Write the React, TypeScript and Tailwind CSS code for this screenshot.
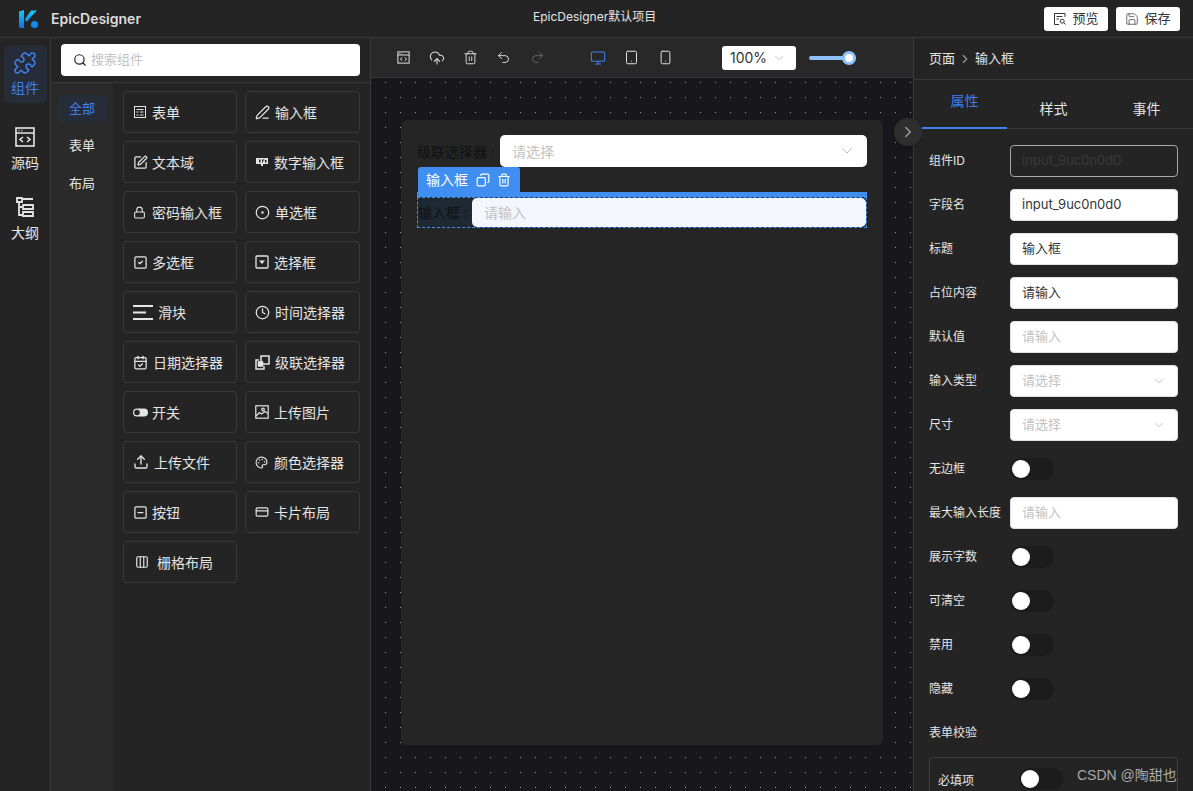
import {
  Search, Puzzle, PenLine, SquarePen, Lock, CircleDot, SquareCheck, Clock, CalendarCheck,
  Upload, SquareMinus, CreditCard, Columns3, CloudUpload, Trash2, Undo2, Redo2, Monitor,
  Tablet, Smartphone, ChevronDown, ChevronRight, Copy, Save, Palette,
} from "lucide-react"
import type { ReactNode } from "react"

const SourceIcon = ({ size = 24 }: { size?: number }) => (
  <svg width={size} height={size} viewBox="0 0 24 24" fill="none" stroke="currentColor" strokeWidth="1.6">
    <rect x="3" y="3" width="18" height="18" />
    <path d="M3 8h18M5.5 5.5h1M8.5 5.5h1" />
    <path d="M10 12l-3 2.5 3 2.5M14 12l3 2.5-3 2.5" />
  </svg>
)

const OutlineIcon = () => (
  <svg width="24" height="24" viewBox="0 0 24 24" fill="none" stroke="currentColor" strokeWidth="1.8">
    <path d="M4 3h5v4H4zM6 7v13h3M6 12h3" />
    <path d="M10 4h10M10 10h10v4H10zM10 17h10v4H10z" />
  </svg>
)

const LogoIcon = () => (
  <svg width="20" height="18" viewBox="0 0 20 18">
    <defs>
      <linearGradient id="logo" x1="0" y1="0" x2="0" y2="1">
        <stop offset="0" stopColor="#18c8f0" />
        <stop offset="1" stopColor="#1470f0" />
      </linearGradient>
    </defs>
    <path d="M0 1.5 5 0v18H2a2 2 0 0 1-2-2zM6 9l6-8.500h6L11 8l-3.500 4z" fill="url(#logo)" />
    <circle cx="15.500" cy="14.500" r="3.500" fill="#0f8cf0" />
  </svg>
)

const FormIcon = () => (
  <svg width="14" height="14" viewBox="0 0 14 14" fill="none" stroke="currentColor">
    <rect x="1.500" y="1.500" width="11" height="11" />
    <path d="M3.500 4.500h7M3.500 7h2M7 7h3.500M3.500 10h2M7 10h3.500" />
  </svg>
)

const NumberIcon = () => (
  <svg width="14" height="14" viewBox="0 0 14 14" fill="currentColor">
    <path d="M1 3h12v6H8v2H6V9H1z" />
    <path d="M4 4.500h1.500v3H4zM7 4.500h2.500v1H8v2H7zM10 5h1.500v2.500H10z" fill="#252525" />
  </svg>
)

const SelectIcon = () => (
  <svg width="14" height="14" viewBox="0 0 14 14" fill="none" stroke="currentColor" strokeWidth="1.300">
    <rect x="1" y="1" width="12" height="12" rx="1" />
    <path d="M4 5.500h6L7 9z" fill="currentColor" stroke="none" />
  </svg>
)

const SliderIcon = () => (
  <svg width="20" height="15" viewBox="0 0 20 15" fill="currentColor">
    <path d="M0 0h20v2H0zM0 6.500h13v2H0zM0 13h20v2H0z" />
  </svg>
)

const CascadeIcon = () => (
  <svg width="15" height="15" viewBox="0 0 15 15" fill="none" stroke="currentColor" strokeWidth="1.500">
    <rect x="6" y="1" width="8" height="8" />
    <path d="M4 5H1v9h8v-3" />
    <rect x="3.500" y="7" width="4" height="4" fill="currentColor" />
  </svg>
)

const SwitchIcon = () => (
  <svg width="15" height="9" viewBox="0 0 15 9">
    <rect width="15" height="8" y="0.500" rx="4" fill="#e5e5e5" />
    <circle cx="4" cy="4.500" r="2.800" fill="#252525" />
  </svg>
)

const ImageIcon = () => (
  <svg width="14" height="14" viewBox="0 0 14 14" fill="none" stroke="currentColor" strokeWidth="1.200">
    <rect x="0.800" y="0.800" width="12.400" height="12.400" />
    <circle cx="8" cy="4.500" r="1.300" />
    <path d="M1 11l3.500-3.500 2 1.500L10 6.500l3 2" />
  </svg>
)

const PreviewIcon = () => (
  <svg width="14" height="14" viewBox="0 0 14 14" fill="none" stroke="#333" strokeWidth="1">
    <path d="M12 5V1.500H1.500v11H6M3.500 4.500h6M3.500 7H6" />
    <circle cx="9.200" cy="9.200" r="2" />
    <path d="M10.700 10.700 12.500 12.500" />
  </svg>
)

interface WidgetItem {
  name: string
  icon: ReactNode
  slot: string
}

const items: WidgetItem[] = [
  { name: "表单", icon: <FormIcon />, slot: "w-[19px]" },
  { name: "输入框", icon: <PenLine size={15} />, slot: "w-[20px]" },
  { name: "文本域", icon: <SquarePen size={15} />, slot: "w-[19px]" },
  { name: "数字输入框", icon: <NumberIcon />, slot: "w-[19px]" },
  { name: "密码输入框", icon: <Lock size={13} />, slot: "w-[19px]" },
  { name: "单选框", icon: <CircleDot size={15} />, slot: "w-[20px]" },
  { name: "多选框", icon: <SquareCheck size={15} />, slot: "w-[19px]" },
  { name: "选择框", icon: <SelectIcon />, slot: "w-[19px]" },
  { name: "滑块", icon: <SliderIcon />, slot: "w-[25px]" },
  { name: "时间选择器", icon: <Clock size={15} />, slot: "w-[20px]" },
  { name: "日期选择器", icon: <CalendarCheck size={15} />, slot: "w-[20px]" },
  { name: "级联选择器", icon: <CascadeIcon />, slot: "w-[20px]" },
  { name: "开关", icon: <SwitchIcon />, slot: "w-[19px]" },
  { name: "上传图片", icon: <ImageIcon />, slot: "w-[19px]" },
  { name: "上传文件", icon: <Upload size={16} />, slot: "w-[21px]" },
  { name: "颜色选择器", icon: <Palette size={13} />, slot: "w-[19px]" },
  { name: "按钮", icon: <SquareMinus size={15} />, slot: "w-[19px]" },
  { name: "卡片布局", icon: <CreditCard size={14} />, slot: "w-[19px]" },
  { name: "栅格布局", icon: <Columns3 size={14} />, slot: "w-[24px] pl-[2px]" },
]

const TextField = ({ value, placeholder }: { value?: string; placeholder?: string }) => (
  <div className="w-[168px] h-[32px] bg-white rounded-[4px] border border-[#e0e0e6] px-[11px] flex items-center text-[13px] text-[#333639]">
    {value ?? <span className="text-[#c2c2c2]">{placeholder}</span>}
  </div>
)

const SelectField = () => (
  <div className="w-[168px] h-[32px] bg-white rounded-[4px] border border-[#e0e0e6] px-[11px] flex items-center justify-between text-[13px] text-[#c2c2c2]">
    请选择
    <ChevronDown size={14} strokeWidth={1} className="text-[#999]" />
  </div>
)

const Toggle = () => (
  <div className="w-[44px] h-[22px] rounded-full bg-[#1c1c1c] flex items-center pl-[2px]">
    <div className="w-[18px] h-[18px] rounded-full bg-white" />
  </div>
)

const PropRow = ({ label, children }: { label: string; children: ReactNode }) => (
  <div className="h-[32px] flex items-center mb-[12px]">
    <div className="w-[81px] shrink-0 text-[12px] text-[#e5e5e5] whitespace-nowrap">{label}</div>
    {children}
  </div>
)

export default function App() {
  return (
    <div
      className="w-[1193px] h-[791px] overflow-hidden relative flex flex-col bg-[#242424] text-[#e5e5e5]"
      style={{ fontFamily: 'Inter, "Noto Sans CJK SC", sans-serif' }}
    >
      {/* Header */}
      <header className="h-[38px] shrink-0 flex items-center justify-between pl-[19px] pr-[13px] border-b border-[#3a3a3a] bg-[#242424] relative">
        <div className="flex items-center gap-[12px]">
          <LogoIcon />
          <span className="text-[14px] font-semibold text-[#dcdcdc]">EpicDesigner</span>
        </div>
        <div className="absolute left-[533px] top-[8px] text-[12px] text-[#e5e5e5]">EpicDesigner默认项目</div>
        <div className="flex items-center gap-[8px]">
          <button className="w-[64px] h-[24px] bg-white rounded-[3px] flex items-center justify-center gap-[5px] text-[13px] text-[#333]">
            <PreviewIcon />
            预览
          </button>
          <button className="w-[64px] h-[24px] bg-white rounded-[3px] flex items-center justify-center gap-[5px] text-[13px] text-[#333]">
            <Save size={14} strokeWidth={1.2} />
            保存
          </button>
        </div>
      </header>

      <div className="flex-1 flex min-h-0">
        {/* Icon rail */}
        <nav className="w-[51px] shrink-0 border-r border-[#3a3a3a] pt-[7px] flex flex-col items-center">
          <div className="w-[43px] h-[58px] rounded-[6px] bg-[#262d38] flex flex-col items-center justify-center text-[#3f7fee] text-[14px] gap-[2px]">
            <Puzzle size={24} strokeWidth={1.5} />
            组件
          </div>
          <div className="mt-[22px] flex flex-col items-center gap-[3px] text-[14px]">
            <SourceIcon />
            源码
          </div>
          <div className="mt-[22px] flex flex-col items-center gap-[3px] text-[14px]">
            <OutlineIcon />
            大纲
          </div>
        </nav>

        {/* Widget panel */}
        <aside className="w-[320px] shrink-0 border-r border-[#3a3a3a] flex flex-col">
          <div className="h-[45px] shrink-0 border-b border-[#3a3a3a] px-[10px] pt-[6px]">
            <div className="h-[32px] bg-white rounded-[4px] flex items-center pl-[12px] gap-[4px] text-[13px] text-[#c2c2c2]">
              <Search size={14} className="text-[#222]" />
              搜索组件
            </div>
          </div>
          <div className="flex-1 flex min-h-0">
            <div className="w-[62px] shrink-0 bg-[#2a2a2a] pt-[12px] flex flex-col items-center text-[13px]">
              <div className="w-[50px] h-[28px] rounded-[5px] bg-[#262d38] text-[#3f7fee] flex items-center justify-center">全部</div>
              <div className="h-[28px] mt-[9px] flex items-center">表单</div>
              <div className="h-[28px] mt-[10px] flex items-center">布局</div>
            </div>
            <div className="flex-1 pl-[10px] pr-[10px] pt-[8px]">
              <div className="grid grid-cols-[114px_115px] gap-x-[8px] gap-y-[8px]">
                {items.map((item) => (
                  <div
                    key={item.name}
                    className="h-[42px] rounded-[4px] border border-[#3a3a3a] pl-[9px] flex items-center text-[14px] text-[#e5e5e5] whitespace-nowrap"
                  >
                    <span className={`${item.slot} shrink-0 flex items-center`}>{item.icon}</span>
                    {item.name}
                  </div>
                ))}
              </div>
            </div>
          </div>
        </aside>

        {/* Canvas column */}
        <main className="w-[543px] shrink-0 flex flex-col border-r border-[#3a3a3a]">
          <div className="h-[40px] shrink-0 border-b border-[#3a3a3a] bg-[#282828] flex items-center pl-[25px] text-[#e0e0e0]">
            <SourceIcon size={15} />
            <CloudUpload size={16} strokeWidth={1.6} className="ml-[18px]" />
            <Trash2 size={15} strokeWidth={1.5} className="ml-[18px]" />
            <Undo2 size={15} strokeWidth={1.5} className="ml-[18px]" />
            <Redo2 size={15} strokeWidth={1.5} className="ml-[19px] text-[#666]" />
            <Monitor size={16} strokeWidth={1.6} className="ml-[45px] text-[#3f7fee]" />
            <Tablet size={15} strokeWidth={1.6} className="ml-[18px]" />
            <Smartphone size={15} strokeWidth={1.6} className="ml-[19px]" />
            <div className="ml-[49px] w-[74px] h-[24px] bg-white rounded-[3px] flex items-center justify-between pl-[8px] pr-[10px] text-[14px] text-[#333]">
              100%
              <ChevronDown size={14} strokeWidth={1} className="text-[#999]" />
            </div>
            <div className="ml-[13px] w-[47px] h-[4px] rounded-full bg-[#8cc0f8] relative">
              <div className="absolute right-0 top-[-5px] w-[14px] h-[14px] rounded-full bg-white border-[3px] border-[#8cc0f8]" />
            </div>
          </div>

          <div className="flex-1 relative bg-[#18181c] bg-[radial-gradient(#9a9a9a_0.6px,transparent_0.9px)] bg-[size:15px_15px] bg-[position:7px_-3px] pt-[42px] px-[30px]">
            <div className="w-[482px] h-[625px] bg-[#252525] rounded-[6px] pt-[15px] pl-[16px] pr-[16px] relative">
              <div className="flex items-center h-[32px] text-[14px] text-[#111]">
                <span className="w-[83px] whitespace-nowrap">级联选择器 :</span>
                <div className="flex-1 h-[32px] bg-white rounded-[5px] flex items-center justify-between px-[12px] text-[#c2c2c2]">
                  请选择
                  <ChevronDown size={16} strokeWidth={1} className="text-[#999]" />
                </div>
              </div>

              {/* Selected field */}
              <div className="mt-[25px] border-t-[5px] border-t-[#408ff0] relative">
                <div className="h-[31px] flex items-stretch border border-dashed border-[#408ff0] bg-[#1f2933] text-[14px] text-[#111]">
                  <span className="w-[54px] flex items-center whitespace-nowrap">输入框 :</span>
                  <div className="flex-1 bg-[#f3f6fd] rounded-[5px] flex items-center px-[12px] text-[#c2c2c2]">请输入</div>
                </div>
                <div className="absolute left-[1px] top-[-30px] w-[102px] h-[25px] bg-[#408ff0] rounded-t-[3px] flex items-center pl-[8px] text-[14px] text-white">
                  输入框
                  <Copy size={14} className="ml-[8px] -scale-x-100" />
                  <Trash2 size={14} className="ml-[7px]" />
                </div>
              </div>
            </div>
          </div>
        </main>

        {/* Properties panel */}
        <aside className="flex-1 min-w-0 flex flex-col">
          <div className="h-[42px] shrink-0 border-b border-[#3a3a3a] pl-[15px] flex items-center text-[13px] text-[#e5e5e5]">
            页面
            <ChevronRight size={14} className="mx-[3px] text-[#999]" />
            输入框
          </div>
          <div className="h-[49px] shrink-0 border-b border-[#3a3a3a] pl-[8px] flex text-[14px]">
            <div className="w-[85px] -mb-px h-[49px] border-b-2 border-[#3f7fee] text-[#3f7fee] flex justify-center pt-[10px]">属性</div>
            <div className="w-[93px] flex justify-center pt-[18px]">样式</div>
            <div className="w-[93px] flex justify-center pt-[18px]">事件</div>
          </div>
          <div className="pl-[15px] pt-[16px]">
            <PropRow label="组件ID">
              <div className="w-[168px] h-[32px] rounded-[4px] border border-[#a8a8a8] px-[11px] flex items-center text-[13px] text-[#3a3a3a]">input_9uc0n0d0</div>
            </PropRow>
            <PropRow label="字段名"><TextField value="input_9uc0n0d0" /></PropRow>
            <PropRow label="标题"><TextField value="输入框" /></PropRow>
            <PropRow label="占位内容"><TextField value="请输入" /></PropRow>
            <PropRow label="默认值"><TextField placeholder="请输入" /></PropRow>
            <PropRow label="输入类型"><SelectField /></PropRow>
            <PropRow label="尺寸"><SelectField /></PropRow>
            <PropRow label="无边框"><Toggle /></PropRow>
            <PropRow label="最大输入长度"><TextField placeholder="请输入" /></PropRow>
            <PropRow label="展示字数"><Toggle /></PropRow>
            <PropRow label="可清空"><Toggle /></PropRow>
            <PropRow label="禁用"><Toggle /></PropRow>
            <PropRow label="隐藏"><Toggle /></PropRow>
            <div className="h-[32px] flex items-center text-[12px] text-[#e5e5e5]">表单校验</div>
            <div className="mt-[8px] w-[249px] h-[60px] rounded-[4px] border border-[#3f3f3f] pl-[8px] pt-[10px] flex items-start">
              <span className="w-[81px] text-[12px] pt-[4px]">必填项</span>
              <Toggle />
            </div>
          </div>
        </aside>
      </div>

      <div className="absolute left-[894px] top-[118px] w-[28px] h-[28px] rounded-full bg-[#2e2e2e] shadow-md flex items-center justify-center text-[#9a9a9a]">
        <ChevronRight size={18} strokeWidth={2} />
      </div>
      <div className="absolute left-[1077px] top-[765px] text-[14px] text-[#a8a8a8] whitespace-nowrap" style={{ fontFamily: '"Liberation Sans", "Noto Sans CJK SC", sans-serif' }}>
        CSDN @陶甜也
      </div>
    </div>
  )
}
